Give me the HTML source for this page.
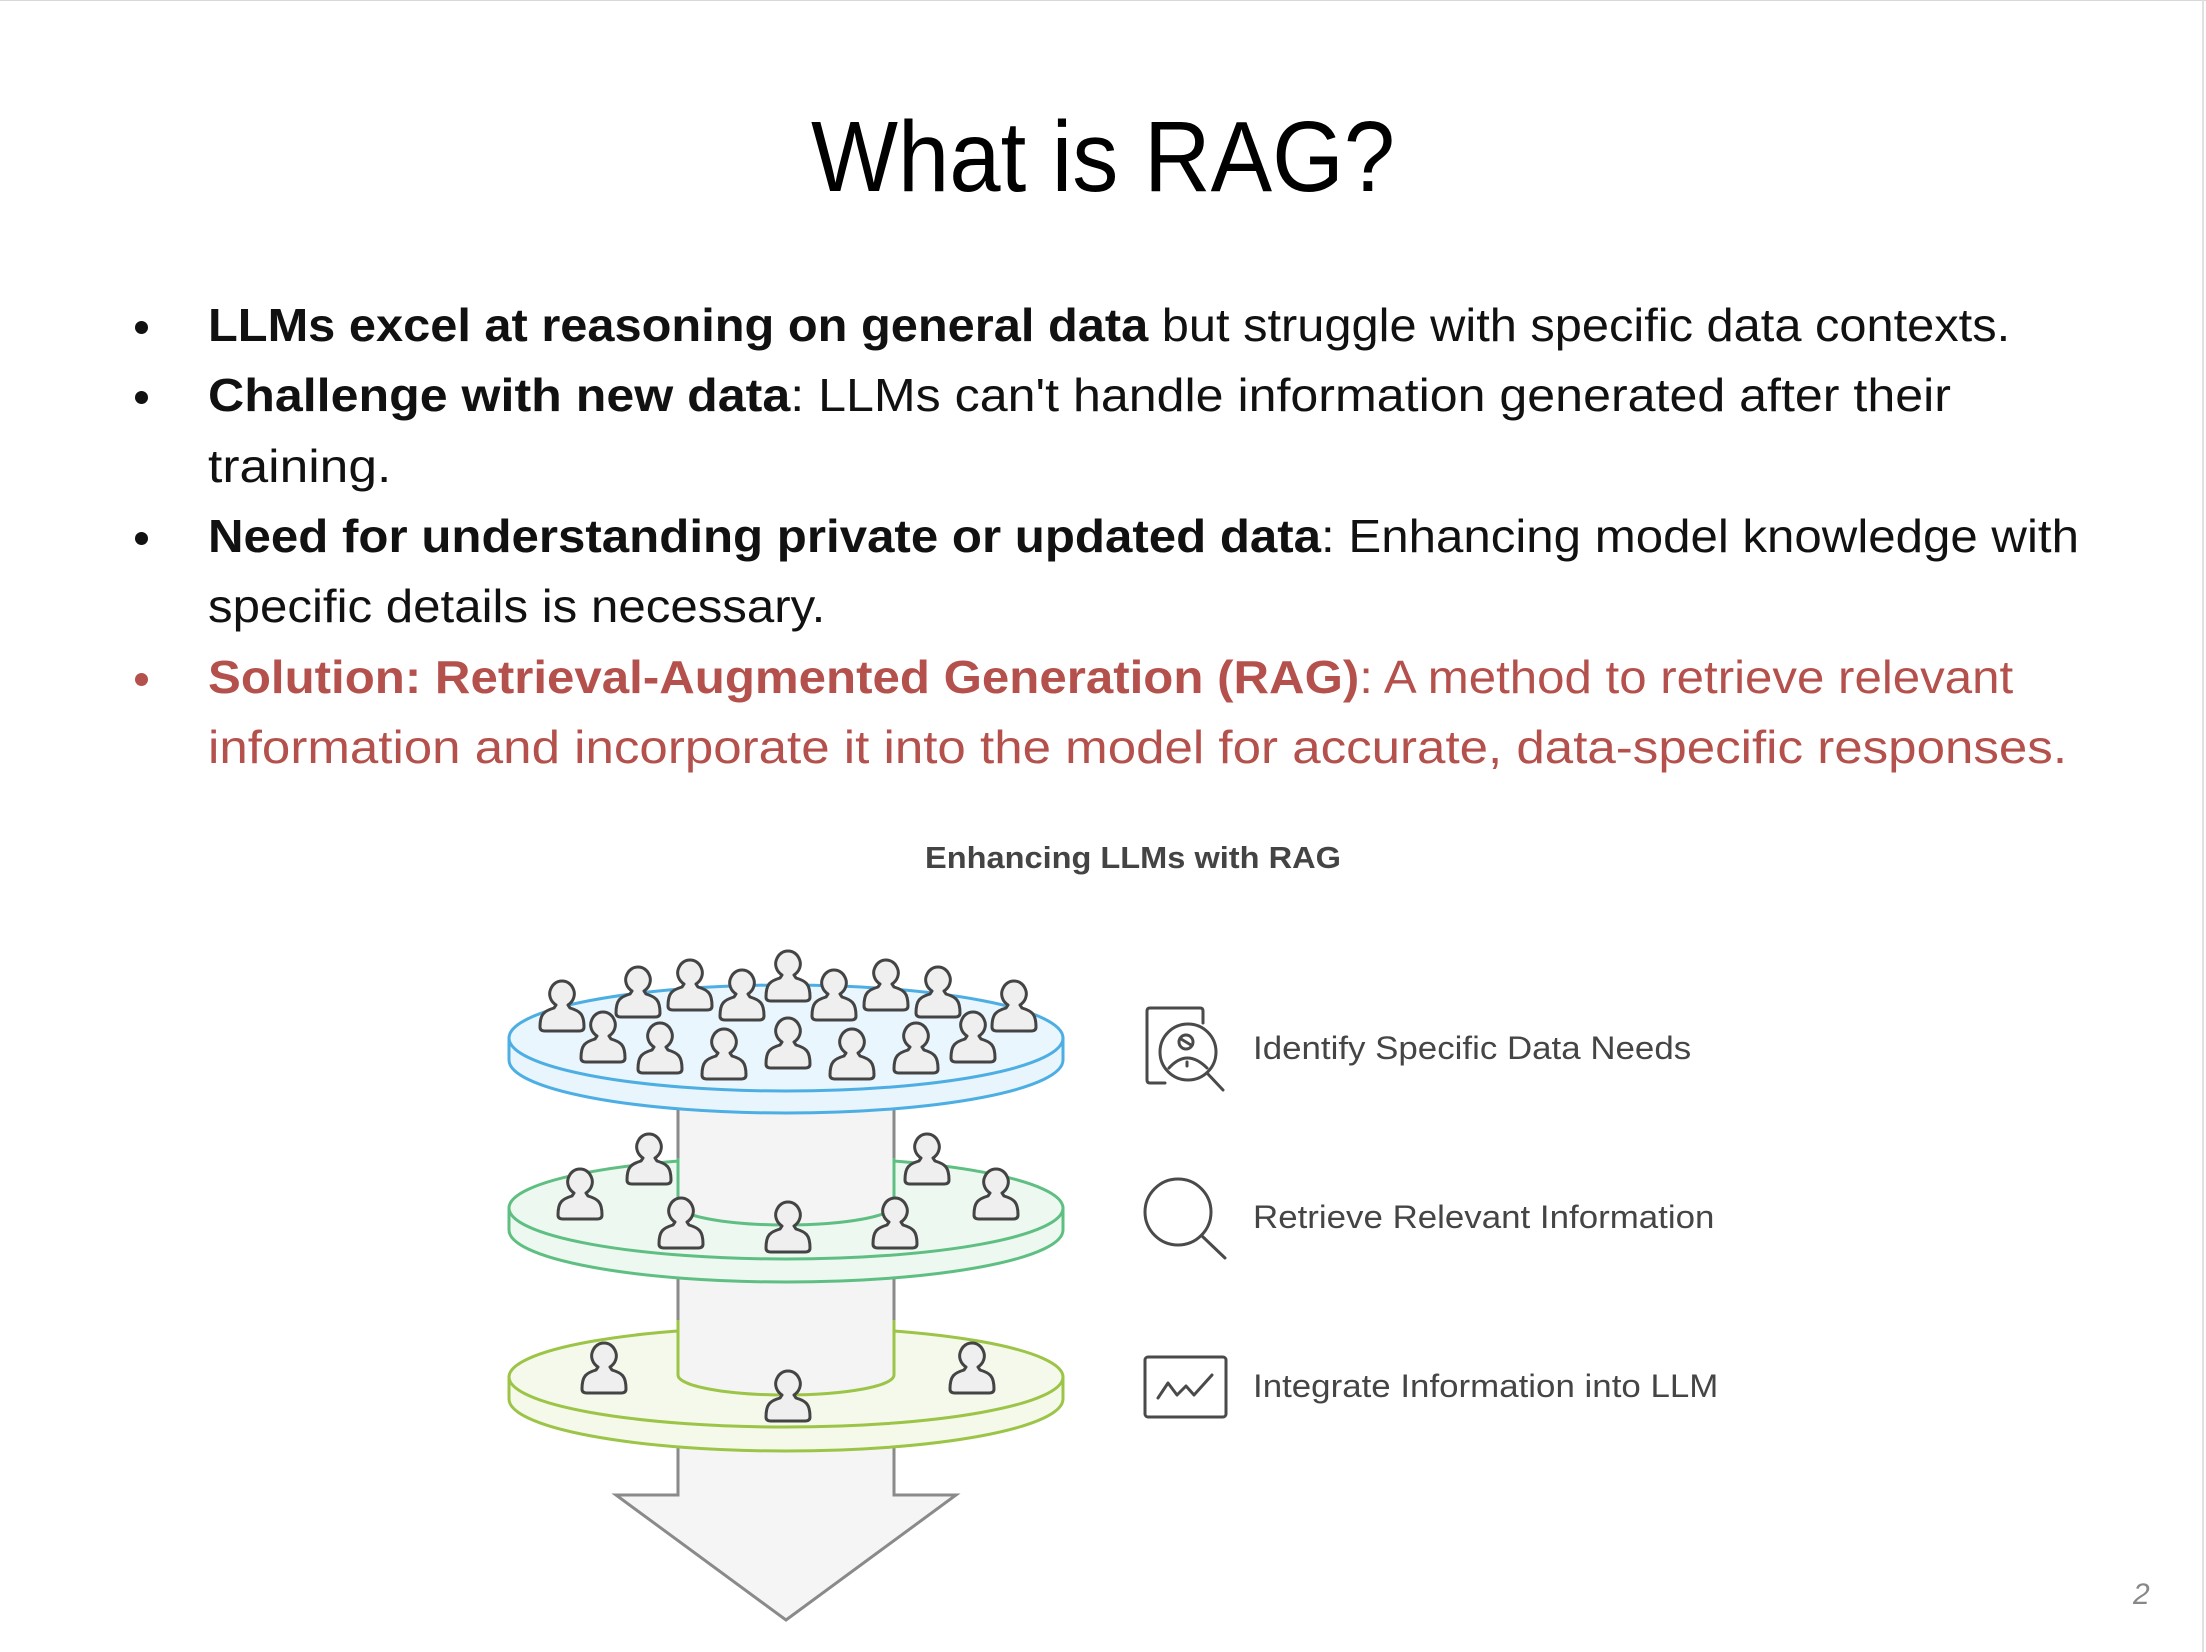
<!DOCTYPE html>
<html><head><meta charset="utf-8"><style>
html,body{margin:0;padding:0;background:#fff}
body{width:2206px;height:1652px;position:relative;overflow:hidden;font-family:"Liberation Sans",sans-serif}
.t{position:absolute;white-space:nowrap;transform-origin:left bottom}
.b{font-size:46px;color:#111;line-height:1}
.r{color:#b5514c}
.dot{position:absolute;width:13px;height:13px;border-radius:50%;background:#111}
.lab{position:absolute;font-size:32px;color:#454545;white-space:nowrap;line-height:1;transform:scaleX(1.09);transform-origin:left center}
</style></head><body>
<div style="position:absolute;left:0;top:0;width:2206px;height:1px;background:#d8d8d8"></div>
<div style="position:absolute;left:2202px;top:0;width:2px;height:1652px;background:#e0e0e0"></div>

<div class="t" style="left:811px;top:100px;font-size:100px;color:#000;transform:scaleX(0.922);">What is RAG?</div>

<div class="dot" style="left:135px;top:321px"></div>
<div class="t b" style="left:208px;top:302px;transform:scaleX(1.06)"><b>LLMs excel at reasoning on general data</b> but struggle with specific data contexts.</div>
<div class="dot" style="left:135px;top:391px"></div>
<div class="t b" style="left:208px;top:372px;transform:scaleX(1.09)"><b>Challenge with new data</b>: LLMs can't handle information generated after their</div>
<div class="t b" style="left:208px;top:443px;transform:scaleX(1.12)">training.</div>
<div class="dot" style="left:135px;top:532px"></div>
<div class="t b" style="left:208px;top:513px;transform:scaleX(1.07)"><b>Need for understanding private or updated data</b>: Enhancing model knowledge with</div>
<div class="t b" style="left:208px;top:583px;transform:scaleX(1.07)">specific details is necessary.</div>
<div class="dot" style="left:135px;top:673px;background:#b5514c"></div>
<div class="t b r" style="left:208px;top:654px;transform:scaleX(1.07)"><b>Solution: Retrieval-Augmented Generation (RAG)</b>: A method to retrieve relevant</div>
<div class="t b r" style="left:208px;top:724px;transform:scaleX(1.11)">information and incorporate it into the model for accurate, data-specific responses.</div>

<div class="t" style="left:925px;top:840px;font-size:31px;font-weight:bold;color:#444;transform:scaleX(1.05)">Enhancing LLMs with RAG</div>

<svg width="2206" height="1652" style="position:absolute;left:0;top:0">
<defs>
<g id="p">
<path d="M-22,-3 C-22,-16 -18,-19 -8,-22 L-6,-25 C-12,-29 -13,-35 -12,-39 C-10,-46 -5,-49 0,-49 C5,-49 10,-46 12,-39 C13,-35 12,-29 6,-25 L8,-22 C18,-19 22,-16 22,-3 C22,0 20,1 17,1 L-17,1 C-20,1 -22,0 -22,-3 Z" fill="#efefef" stroke="#444" stroke-width="3" stroke-linejoin="round"/>
</g>
</defs>
<polygon points="678,1430 678,1495 616,1495 786,1620 956,1495 894,1495 894,1430" fill="#f5f5f5" stroke="#8a8a8a" stroke-width="3" stroke-linejoin="miter"/>
<path d="M509,1377 L509,1399 A277,52 0 0 0 1063,1399 L1063,1377 Z" fill="#f4f9ea" stroke="#9cc447" stroke-width="3"/>
<ellipse cx="786" cy="1377" rx="277" ry="50" fill="#f5f9eb" stroke="#9cc447" stroke-width="3"/>
<path d="M678,1270 L678,1375 A108,20 0 0 0 894,1375 L894,1270 Z" fill="#f4f4f4" stroke="none"/>
<path d="M678,1270 L678,1320" stroke="#8a8a8a" stroke-width="3"/><path d="M894,1270 L894,1320" stroke="#8a8a8a" stroke-width="3"/>
<path d="M678,1320 L678,1375 A108,20 0 0 0 894,1375 L894,1320" fill="none" stroke="#9cc447" stroke-width="3"/>
<use href="#p" x="604" y="1392"/><use href="#p" x="788" y="1420"/><use href="#p" x="972" y="1392"/>
<path d="M509,1208 L509,1230 A277,52 0 0 0 1063,1230 L1063,1208 Z" fill="#ecf8f0" stroke="#5fbf82" stroke-width="3"/>
<ellipse cx="786" cy="1208" rx="277" ry="51" fill="#edf8f1" stroke="#5fbf82" stroke-width="3"/>
<path d="M678,1100 L678,1205 A108,20 0 0 0 894,1205 L894,1100 Z" fill="#f4f4f4"/>
<path d="M678,1100 L678,1158" stroke="#8a8a8a" stroke-width="3"/><path d="M894,1100 L894,1158" stroke="#8a8a8a" stroke-width="3"/>
<path d="M678,1158 L678,1205 A108,20 0 0 0 894,1205 L894,1158" fill="none" stroke="#5fbf82" stroke-width="3"/>
<use href="#p" x="649" y="1183"/><use href="#p" x="580" y="1218"/><use href="#p" x="681" y="1247"/><use href="#p" x="788" y="1251"/><use href="#p" x="895" y="1247"/><use href="#p" x="927" y="1183"/><use href="#p" x="996" y="1218"/>
<path d="M509,1038 L509,1060 A277,53 0 0 0 1063,1060 L1063,1038 Z" fill="#e8f5fc" stroke="#4daee3" stroke-width="3"/>
<ellipse cx="786" cy="1038" rx="277" ry="53" fill="#eaf6fd" stroke="#4daee3" stroke-width="3"/>
<use href="#p" x="562" y="1030"/><use href="#p" x="638" y="1016"/><use href="#p" x="690" y="1009"/><use href="#p" x="742" y="1019"/><use href="#p" x="788" y="1000"/><use href="#p" x="834" y="1019"/><use href="#p" x="886" y="1009"/><use href="#p" x="938" y="1016"/><use href="#p" x="1014" y="1030"/>
<use href="#p" x="603" y="1061"/><use href="#p" x="660" y="1072"/><use href="#p" x="724" y="1078"/><use href="#p" x="788" y="1067"/><use href="#p" x="852" y="1078"/><use href="#p" x="916" y="1072"/><use href="#p" x="973" y="1061"/>

<g fill="none" stroke="#4a4a4a" stroke-width="3" stroke-linecap="round" stroke-linejoin="round">
<path d="M1165,1083 L1150,1083 Q1147,1083 1147,1080 L1147,1011 Q1147,1008 1150,1008 L1200,1008 Q1203,1008 1203,1011 L1203,1023"/>
<circle cx="1188" cy="1052" r="28"/>
<path d="M1207,1073 L1223,1090"/>
<circle cx="1186" cy="1042" r="7"/>
<path d="M1181,1039 L1191,1045"/>
<path d="M1169,1068 Q1187,1048 1207,1068"/>
<path d="M1187,1062 L1187,1066"/>
<circle cx="1178" cy="1212" r="33"/>
<path d="M1202,1236 L1225,1258"/>
<rect x="1145" y="1357" width="81" height="60" rx="3"/>
<path d="M1158,1398 L1168,1383 L1177,1395 L1186,1386 L1194,1395 L1212,1375"/>
</g>
</svg>

<div class="lab" style="left:1253px;top:1032px">Identify Specific Data Needs</div>
<div class="lab" style="left:1253px;top:1201px">Retrieve Relevant Information</div>
<div class="lab" style="left:1253px;top:1370px">Integrate Information into LLM</div>

<div class="t" style="left:2133px;top:1578px;font-size:30px;font-style:italic;color:#888">2</div>
</body></html>
